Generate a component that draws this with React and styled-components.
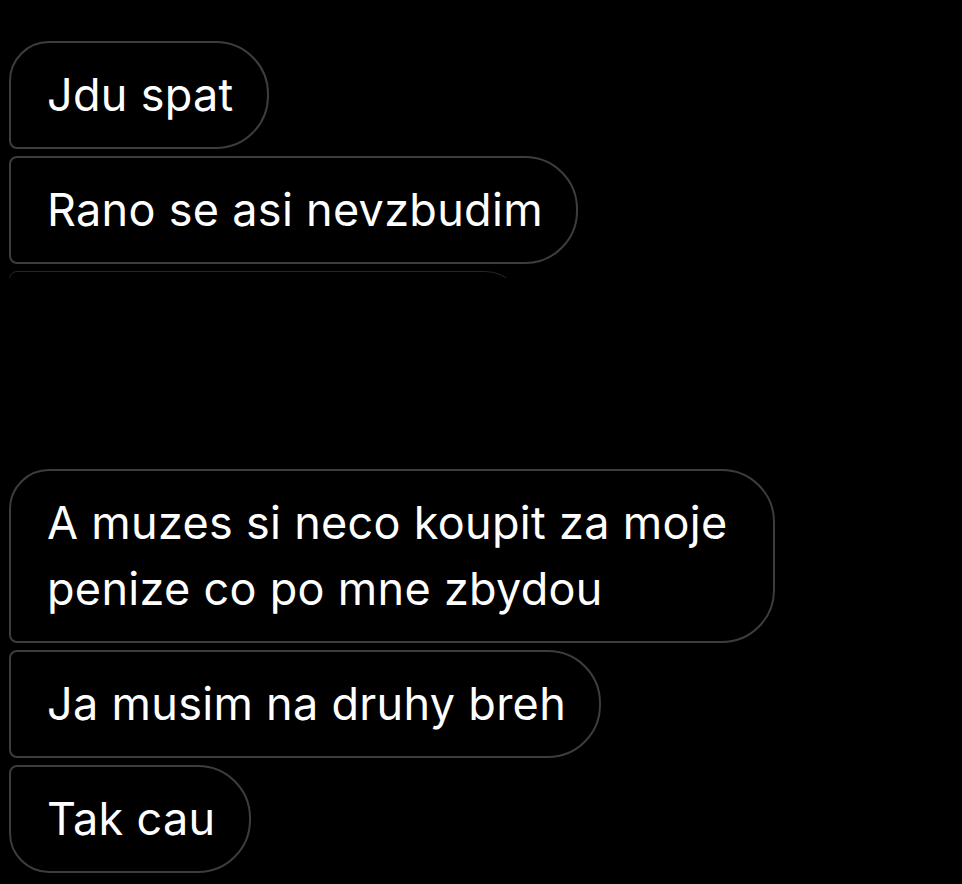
import styled, { createGlobalStyle } from 'styled-components';

const GlobalStyle = createGlobalStyle`
	html,
	body {
		margin: 0;
		background: #000;
	}
	body {
		font-family: 'Inter', 'Roboto', 'Liberation Sans', sans-serif;
		-webkit-font-smoothing: antialiased;
	}
`;

const Thread = styled.div`
	display: flex;
	flex-direction: column;
	align-items: flex-start;
	padding: 41px 0 13px 9px;
	min-height: 884px;
	box-sizing: border-box;
`;

const Group = styled.div`
	display: flex;
	flex-direction: column;
	align-items: flex-start;
	gap: 7px;
	margin-bottom: ${(p) => p.$gapAfter || 0}px;
`;

const Bubble = styled.div`
	box-sizing: border-box;
	max-width: 766px;
	padding: 19px 33px 19px 36px;
	border: 2px solid #3d3d3d;
	border-radius: ${(p) => (p.$first ? 40 : 8)}px 53px 53px
		${(p) => (p.$last ? 40 : 8)}px;
	background: #000;
	color: #fff;
	font-size: 45px;
	line-height: 66px;
	letter-spacing: 0.3px;
	white-space: pre-wrap;
`;

// top edge of the next message, scrolled mostly out of view
const Peek = styled.div`
	width: 516px;
	height: 7px;
	overflow: hidden;
	opacity: 0.45;
`;

const PeekEdge = styled.div`
	height: 40px;
	border: 1px solid #555;
	border-radius: 8px 40px 0 0;
`;

const lateMessages = [
	'A muzes si neco koupit za moje penize co po mne zbydou',
	'Ja musim na druhy breh',
	'Tak cau',
];

function App() {
	return (
		<>
			<GlobalStyle />
			<Thread>
				<Group $gapAfter={191}>
					<Bubble $first>Jdu spat</Bubble>
					<Bubble>Rano se asi nevzbudim</Bubble>
					<Peek>
						<PeekEdge />
					</Peek>
				</Group>
				<Group>
					{lateMessages.map((text, i) => (
						<Bubble
							key={text}
							$first={i === 0}
							$last={i === lateMessages.length - 1}
						>
							{text}
						</Bubble>
					))}
				</Group>
			</Thread>
		</>
	);
}

export default App;
